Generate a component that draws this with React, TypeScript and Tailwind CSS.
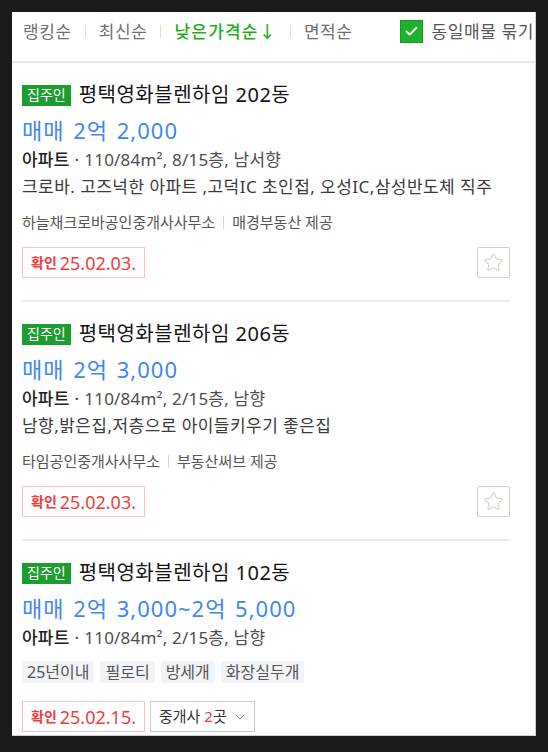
import { Star, ChevronDown, Check } from "lucide-react";

type Listing = {
  title: string;
  price: string;
  spec: string;
  desc?: string;
  agency?: string;
  provider?: string;
  tags?: string[];
  confirmed: string;
  agents?: number;
};

const LISTINGS: Listing[] = [
  {
    title: "평택영화블렌하임 202동",
    price: "매매 2억 2,000",
    spec: "110/84m², 8/15층, 남서향",
    desc: "크로바. 고즈넉한 아파트 ,고덕IC 초인접, 오성IC,삼성반도체 직주",
    agency: "하늘채크로바공인중개사사무소",
    provider: "매경부동산 제공",
    confirmed: "25.02.03.",
  },
  {
    title: "평택영화블렌하임 206동",
    price: "매매 2억 3,000",
    spec: "110/84m², 2/15층, 남향",
    desc: "남향,밝은집,저층으로 아이들키우기 좋은집",
    agency: "타임공인중개사사무소",
    provider: "부동산써브 제공",
    confirmed: "25.02.03.",
  },
  {
    title: "평택영화블렌하임 102동",
    price: "매매 2억 3,000~2억 5,000",
    spec: "110/84m², 2/15층, 남향",
    tags: ["25년이내", "필로티", "방세개", "화장실두개"],
    confirmed: "25.02.15.",
    agents: 2,
  },
];

const SORTS = ["랭킹순", "최신순", "낮은가격순", "면적순"];

function ListingItem({ item, last }: { item: Listing; last: boolean }) {
  return (
    <div className={"ml-[10px] mr-[25px] pt-[20px] " + (last ? "pb-[3px]" : "border-b-2 border-[#ececec] pb-[22px]")}>
      <div className="flex h-[24px] items-center gap-[8px]">
        <span className="flex h-[21px] items-center bg-[#1c9d2f] px-[5px] text-[14px] leading-none text-white">집주인</span>
        <span className="text-[20px] leading-none tracking-[0.5px] text-[#141414]">{item.title}</span>
      </div>
      <div className="mt-[10px] flex h-[26px] items-center text-[22px] leading-none tracking-[1px] text-[#3f87f2] [word-spacing:2px]">{item.price}</div>
      <div className="mt-[5px] flex h-[22px] items-center text-[17px] leading-none tracking-[0.2px]">
        <span className="font-medium text-[#222]">아파트</span>
        <span className="mx-[5px] text-[#333]">·</span>
        <span className="text-[#4d4d4d]">{item.spec}</span>
      </div>
      {item.desc && (
        <div className="mt-[5px] flex h-[22px] items-center whitespace-nowrap text-[17px] leading-none tracking-[0.45px] text-[#3a3a3a]">{item.desc}</div>
      )}
      {item.agency && (
        <div className="mt-[15px] flex h-[20px] items-center text-[15px] leading-none text-[#555]">
          <span>{item.agency}</span>
          <span className="mx-[8px] h-[13px] w-px bg-[#d6d6d6]" />
          <span>{item.provider}</span>
        </div>
      )}
      {item.tags && (
        <div className="mt-[13px] flex h-[22px] gap-[6px]">
          {item.tags.map((t) => (
            <span key={t} className="flex items-center bg-[#f1f3f6] px-[5px] text-[16px] leading-none text-[#555]">{t}</span>
          ))}
        </div>
      )}
      <div className={"flex items-center justify-between " + (item.tags ? "mt-[18px]" : "mt-[15px]")}>
        <div className="flex gap-[5px]">
          <div className="flex h-[31px] items-center border border-[#ffbcbc] px-[8px] text-[#f23b3b]">
            <span className="mr-[3px] text-[14px] font-bold leading-none">확인</span>
            <span className="text-[18px] leading-none">{item.confirmed}</span>
          </div>
          {item.agents && (
            <div className="flex h-[31px] items-center border border-[#c9c9c9] pl-[8px] pr-[6px] text-[15px] leading-none text-[#333]">
              <span>중개사&nbsp;</span>
              <span className="text-[#f23b3b]">{item.agents}</span>
              <span>곳</span>
              <ChevronDown className="ml-[5px] h-[16px] w-[16px] text-[#888]" strokeWidth={1.5} />
            </div>
          )}
        </div>
        {!item.agents && (
          <button type="button" className="flex h-[31px] w-[33px] items-center justify-center rounded-[2px] border border-[#cfcfcf] bg-white">
            <Star className="h-[21px] w-[21px] text-[#dcd2c2]" strokeWidth={1.3} />
          </button>
        )}
      </div>
    </div>
  );
}

export default function App() {
  return (
    <div className="h-[752px] w-[548px] bg-[#1b1b1b] pl-[12px] pt-[12px]" style={{ fontFamily: '"Noto Sans", "Noto Sans CJK KR", sans-serif' }}>
      <div className="w-[524px] overflow-hidden border-b border-r border-[#cfcfcf] bg-white">
        <div className="flex h-[51px] items-start border-b-2 border-[#e9e9e9] pl-[11px] pt-[8px] whitespace-nowrap">
          <div className="flex h-[22px] items-center text-[17px] leading-none tracking-[0.6px]">
            {SORTS.map((s, i) => (
              <div key={s} className="flex items-center">
                {i > 0 && <span className="mx-[13px] h-[13px] w-px bg-[#dedede]" />}
                {s === "낮은가격순" ? (
                  <span className="font-medium tracking-[1.2px] text-[#1eab22]">낮은가격순↓</span>
                ) : (
                  <span className="text-[#707070]">{s}</span>
                )}
              </div>
            ))}
          </div>
          <div className="ml-[47px] flex h-[22px] items-center">
            <span className="flex h-[23px] w-[23px] items-center justify-center border border-[#169a22] bg-[#1fb32c]">
              <Check className="h-[15px] w-[15px] text-white" strokeWidth={3} />
            </span>
            <span className="ml-[9px] text-[17px] leading-none tracking-[0.6px] text-[#555]">동일매물 묶기</span>
          </div>
        </div>
        {LISTINGS.map((l, i) => (
          <ListingItem key={l.title} item={l} last={i === LISTINGS.length - 1} />
        ))}
      </div>
    </div>
  );
}
